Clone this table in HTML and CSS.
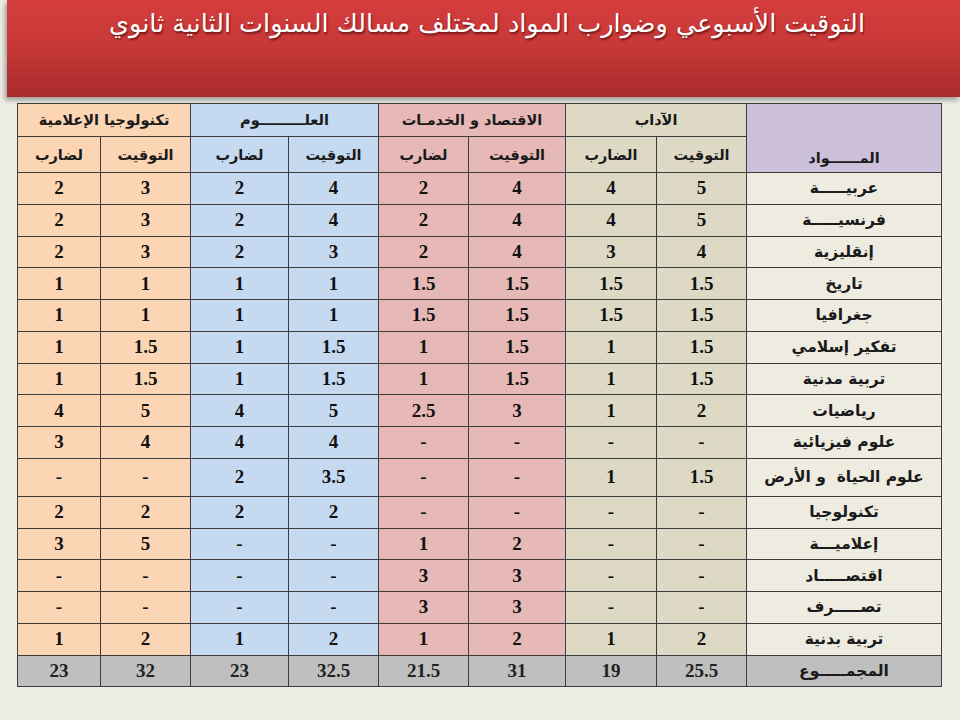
FILE: index.html
```html
<!DOCTYPE html>
<html lang="ar" dir="rtl">
<head>
<meta charset="utf-8">
<title>التوقيت الأسبوعي</title>
<link rel="stylesheet" href="styles.css">
</head>
<body>
<header class="banner">
  <h1 class="title">التوقيت الأسبوعي وضوارب المواد لمختلف مسالك السنوات الثانية ثانوي</h1>
</header>
<main class="sheet">
<table class="grid">
  <colgroup>
    <col class="w-subj"><col class="w90"><col class="w91"><col class="w97"><col class="w90"><col class="w90"><col class="w98"><col class="w90"><col class="w83">
  </colgroup>
  <thead>
    <tr class="h1">
      <th rowspan="2" class="subj-head">المــــــواد</th>
      <th colspan="2" class="arts">الآداب</th>
      <th colspan="2" class="eco">الاقتصاد و الخدمـات</th>
      <th colspan="2" class="sci">العلـــــــــوم</th>
      <th colspan="2" class="tech">تكنولوجيا الإعلامية</th>
    </tr>
    <tr class="h2">
      <th class="arts">التوقيت</th><th class="arts">الضارب</th>
      <th class="eco">التوقيت</th><th class="eco">لضارب</th>
      <th class="sci">التوقيت</th><th class="sci">لضارب</th>
      <th class="tech">التوقيت</th><th class="tech">لضارب</th>
    </tr>
  </thead>
  <tbody>
    <tr><th class="subj">عربيـــــة</th><td class="arts">5</td><td class="arts">4</td><td class="eco">4</td><td class="eco">2</td><td class="sci">4</td><td class="sci">2</td><td class="tech">3</td><td class="tech">2</td></tr>
    <tr><th class="subj">فرنسيـــــة</th><td class="arts">5</td><td class="arts">4</td><td class="eco">4</td><td class="eco">2</td><td class="sci">4</td><td class="sci">2</td><td class="tech">3</td><td class="tech">2</td></tr>
    <tr><th class="subj">إنقليزية</th><td class="arts">4</td><td class="arts">3</td><td class="eco">4</td><td class="eco">2</td><td class="sci">3</td><td class="sci">2</td><td class="tech">3</td><td class="tech">2</td></tr>
    <tr><th class="subj">تاريخ</th><td class="arts">1.5</td><td class="arts">1.5</td><td class="eco">1.5</td><td class="eco">1.5</td><td class="sci">1</td><td class="sci">1</td><td class="tech">1</td><td class="tech">1</td></tr>
    <tr><th class="subj">جغرافيا</th><td class="arts">1.5</td><td class="arts">1.5</td><td class="eco">1.5</td><td class="eco">1.5</td><td class="sci">1</td><td class="sci">1</td><td class="tech">1</td><td class="tech">1</td></tr>
    <tr><th class="subj">تفكير إسلامي</th><td class="arts">1.5</td><td class="arts">1</td><td class="eco">1.5</td><td class="eco">1</td><td class="sci">1.5</td><td class="sci">1</td><td class="tech">1.5</td><td class="tech">1</td></tr>
    <tr><th class="subj">تربية مدنية</th><td class="arts">1.5</td><td class="arts">1</td><td class="eco">1.5</td><td class="eco">1</td><td class="sci">1.5</td><td class="sci">1</td><td class="tech">1.5</td><td class="tech">1</td></tr>
    <tr><th class="subj">رياضيات</th><td class="arts">2</td><td class="arts">1</td><td class="eco">3</td><td class="eco">2.5</td><td class="sci">5</td><td class="sci">4</td><td class="tech">5</td><td class="tech">4</td></tr>
    <tr><th class="subj">علوم فيزيائية</th><td class="arts">-</td><td class="arts">-</td><td class="eco">-</td><td class="eco">-</td><td class="sci">4</td><td class="sci">4</td><td class="tech">4</td><td class="tech">3</td></tr>
    <tr class="tall"><th class="subj">علوم الحياة&nbsp; و الأرض</th><td class="arts">1.5</td><td class="arts">1</td><td class="eco">-</td><td class="eco">-</td><td class="sci">3.5</td><td class="sci">2</td><td class="tech">-</td><td class="tech">-</td></tr>
    <tr><th class="subj">تكنولوجيا</th><td class="arts">-</td><td class="arts">-</td><td class="eco">-</td><td class="eco">-</td><td class="sci">2</td><td class="sci">2</td><td class="tech">2</td><td class="tech">2</td></tr>
    <tr><th class="subj">إعلاميـــة</th><td class="arts">-</td><td class="arts">-</td><td class="eco">2</td><td class="eco">1</td><td class="sci">-</td><td class="sci">-</td><td class="tech">5</td><td class="tech">3</td></tr>
    <tr><th class="subj">اقتصـــــاد</th><td class="arts">-</td><td class="arts">-</td><td class="eco">3</td><td class="eco">3</td><td class="sci">-</td><td class="sci">-</td><td class="tech">-</td><td class="tech">-</td></tr>
    <tr><th class="subj">تصـــــرف</th><td class="arts">-</td><td class="arts">-</td><td class="eco">3</td><td class="eco">3</td><td class="sci">-</td><td class="sci">-</td><td class="tech">-</td><td class="tech">-</td></tr>
    <tr><th class="subj">تربية بدنية</th><td class="arts">2</td><td class="arts">1</td><td class="eco">2</td><td class="eco">1</td><td class="sci">2</td><td class="sci">1</td><td class="tech">2</td><td class="tech">1</td></tr>
  </tbody>
  <tfoot>
    <tr class="total"><th class="subj">المجمـــــوع</th><td>25.5</td><td>19</td><td>31</td><td>21.5</td><td>32.5</td><td>23</td><td>32</td><td>23</td></tr>
  </tfoot>
</table>
</main>
</body>
</html>
```
FILE: styles.css
```css
html, body {
  margin: 0;
  padding: 0;
}
body {
  background: #edece5;
  width: 960px;
  height: 720px;
  overflow: hidden;
  font-family: "DejaVu Sans", "Liberation Sans", sans-serif;
}
.banner {
  margin-right: 0;
  margin-left: 7px;
  height: 97px;
  background: linear-gradient(to bottom, #d43d3d 0%, #c93838 45%, #a82b2b 100%);
  box-shadow: -2px 3px 5px rgba(0, 0, 0, 0.35);
  display: flex;
  justify-content: center;
}
.title {
  margin: 0;
  padding-top: 3px;
  padding-left: 7px;
  font-family: "DejaVu Sans", sans-serif;
  font-weight: normal;
  font-size: 25.5px;
  line-height: 40px;
  color: #ffffff;
  text-shadow: 1px 2px 2px rgba(60, 0, 0, 0.6);
}
.sheet {
  padding-top: 6px;
  padding-right: 18px;
}
.grid {
  border-collapse: collapse;
  table-layout: fixed;
  width: 925px;
  direction: rtl;
}
.w-subj { width: 195px; }
.w90 { width: 90px; }
.w91 { width: 91px; }
.w97 { width: 97px; }
.w98 { width: 98px; }
.w83 { width: 83px; }
.grid th, .grid td {
  border: 1px solid #3c3c3c;
  padding: 0;
  text-align: center;
  vertical-align: middle;
}
.grid td {
  font-family: "Liberation Serif", "Times New Roman", serif;
  font-weight: bold;
  font-size: 19px;
  color: #111;
  height: 30.75px;
}
.grid thead th {
  font-weight: bold;
  font-size: 14.5px;
  color: #1a1a1a;
}
.h1 th { height: 32px; }
.h2 th { height: 35px; }
.subj-head {
  background: #ccc0da;
  vertical-align: bottom !important;
  padding-bottom: 6px !important;
}
.grid .subj {
  background: #eeece1;
  font-weight: bold;
  font-size: 15.5px;
  color: #1a1a1a;
  height: 30.75px;
}
.tall th, .tall td { height: 37px; }
.arts { background: #ddd9c4; }
.eco { background: #e6b8b7; }
.sci { background: #c5d9f1; }
.tech { background: #fcd5b4; }
.total th, .total td { background: #bfbfbf; }
.total td { color: #222; }
.grid .total .subj { background: #bfbfbf; }
```
